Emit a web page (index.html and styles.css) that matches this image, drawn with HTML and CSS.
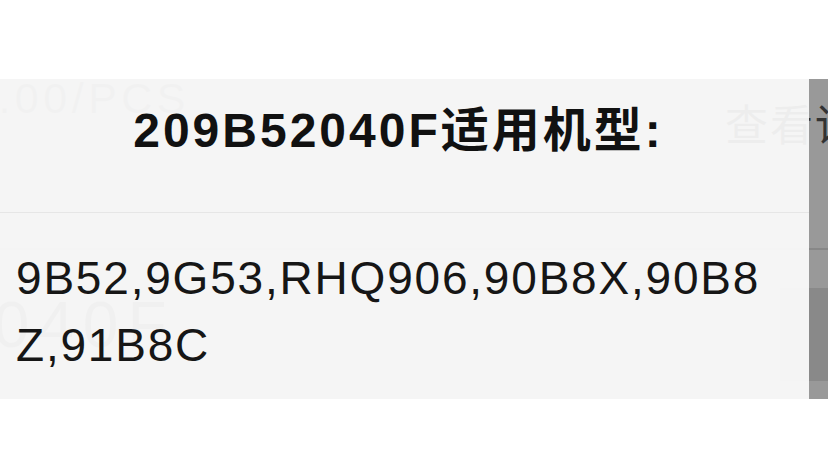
FILE: index.html
```html
<!DOCTYPE html>
<html lang="zh-CN">
<head>
<meta charset="UTF-8">
<meta name="viewport" content="width=device-width, initial-scale=1.0">
<title>适用机型</title>
<link rel="stylesheet" href="styles.css">
</head>
<body>

<div class="screen">
<!-- product page behind the popup -->
<div class="page">
<div class="price-row">
<span class="price">5.00/PCS</span>
<span class="detail-link">查看详情</span>
</div>
<div class="split-line"></div>
<div class="part-row">
<span class="part-no">209B52040F</span>
<span class="qty-box"></span>
</div>
</div>

<div class="mask"></div>

<div class="dialog">
<h2 class="dialog-title">209B52040F适用机型:</h2>
<p class="dialog-body">9B52,9G53,RHQ906,90B8X,90B8Z,91B8C</p>
</div>
</div>

</body>
</html>
```

FILE: styles.css
```css
body {
margin: 0;
background: #fff;
font-family: "Liberation Sans", Arial, "Noto Sans CJK SC", sans-serif;
color: #111;
}
.screen {
position: relative;
margin-top: 79px;
height: 320px;
overflow: hidden;
}
.page {
display: flex;
flex-direction: column;
}
.price-row {
display: flex;
align-items: flex-start;
}
.price {
margin-top: -5px;
margin-left: -30px;
font-size: 43px;
line-height: 48px;
letter-spacing: 4.5px;
color: #b0b0b0;
white-space: nowrap;
}
.detail-link {
margin-top: 26px;
margin-left: auto;
margin-right: -77px;
font-size: 43px;
line-height: 43px;
letter-spacing: 2px;
color: #555;
white-space: nowrap;
flex-shrink: 0;
}
.split-line {
margin-top: 100px;
height: 2px;
background: #e2e2e2;
}
.part-row {
display: flex;
align-items: flex-start;
margin-top: 38px;
}
.part-no {
margin-top: 5px;
margin-left: -281px;
font-size: 64px;
line-height: 64px;
letter-spacing: 9px;
color: #999;
white-space: nowrap;
}
.qty-box {
margin-left: auto;
width: 48px;
height: 93px;
background: #e4e4e4;
flex-shrink: 0;
}
.mask {
position: absolute;
top: 0;
left: 0;
right: 0;
bottom: 0;
background: rgba(0, 0, 0, 0.4);
}
.dialog {
position: absolute;
top: 0;
left: 0;
width: 809px;
height: 320px;
background: rgba(252, 252, 252, 0.93);
}
.dialog-title {
margin: 0;
padding: 24px 12px 53px 0;
border-bottom: 1px solid #e6e6e6;
font-size: 48px;
line-height: 56px;
font-weight: bold;
letter-spacing: 3px;
text-align: center;
color: #111;
}
.dialog-body {
margin: 0;
padding: 32px 34px 0 16px;
font-size: 46px;
line-height: 67px;
letter-spacing: 1.8px;
word-break: break-all;
color: #161616;
}
```
